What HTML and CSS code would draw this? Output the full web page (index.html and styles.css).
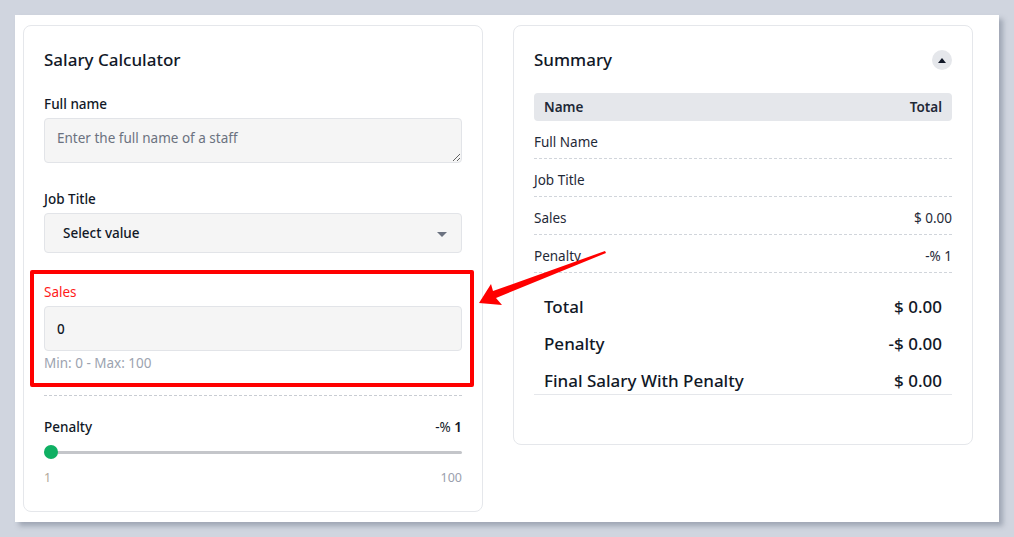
FILE: index.html
```html
<!DOCTYPE html>
<html lang="en">
<head>
<meta charset="utf-8">
<title>Salary Calculator</title>
<link rel="stylesheet" href="styles.css">
</head>
<body>
<div class="frame">
  <div class="cards">
    <section class="card calc">
      <h2 class="title">Salary Calculator</h2>
      <label class="label">Full name</label>
      <textarea class="field textarea" placeholder="Enter the full name of a staff"></textarea>
      <label class="label label-job">Job Title</label>
      <div class="field select"><span>Select value</span><span class="caret"></span></div>
      <label class="label label-sales">Sales</label>
      <input class="field input" type="text" value="0">
      <div class="hint">Min: 0 - Max: 100</div>
      <div class="dash"></div>
      <div class="pen-row"><span>Penalty</span><span class="pen-val">-% <b>1</b></span></div>
      <div class="track"><span class="thumb"></span></div>
      <div class="range-labels"><span class="min">1</span><span class="max">100</span></div>
    </section>
    <section class="card summary">
      <div class="sum-head">
        <h2 class="title">Summary</h2>
        <button class="toggle" type="button"><span class="tri"></span></button>
      </div>
      <div class="thead"><span>Name</span><span>Total</span></div>
      <div class="row"><span>Full Name</span><span></span></div>
      <div class="row"><span>Job Title</span><span></span></div>
      <div class="row"><span>Sales</span><span>$ 0.00</span></div>
      <div class="row"><span>Penalty</span><span>-% 1</span></div>
      <div class="totals">
        <div class="trow"><span>Total</span><span>$ 0.00</span></div>
        <div class="trow"><span>Penalty</span><span>-$ 0.00</span></div>
        <div class="trow"><span>Final Salary With Penalty</span><span>$ 0.00</span></div>
      </div>
    </section>
  </div>
  <div class="annot-box"></div>
  <svg class="annot-arrow" width="1014" height="537" viewBox="0 0 1014 537">
    <polygon points="479,303 491,284 493,291 605,251 606,253 496,298 502,305" fill="#ff0000"/>
  </svg>
</div>
</body>
</html>
```
FILE: styles.css
```css
* { box-sizing: border-box; }
html, body { margin: 0; padding: 0; }
body {
  background: #d0d5df;
  font-family: "Noto Sans", "Open Sans", sans-serif;
  color: #111827;
  width: 1014px;
  height: 537px;
  overflow: hidden;
}
.frame {
  margin: 15px 0 0 15px;
  width: 984px;
  height: 507px;
  background: #ffffff;
  box-shadow: 4px 4px 5px rgba(70, 80, 100, 0.35);
  padding: 10px 0 0 8px;
}
.cards {
  display: grid;
  grid-template-columns: 460px 460px;
  column-gap: 30px;
  align-items: start;
}
.card {
  border: 1px solid #e5e7eb;
  border-radius: 8px;
  padding: 20px;
  display: flex;
  flex-direction: column;
  background: #fff;
}
.calc { padding-bottom: 23px; }
.title {
  margin: 0;
  font-size: 17px;
  line-height: 28px;
  font-weight: 500;
  color: #111827;
}
.calc .title { margin-bottom: 20px; }
.label {
  display: block;
  font-size: 13.5px;
  line-height: 20px;
  font-weight: 500;
  color: #111827;
  margin-bottom: 4px;
}
.label-job { margin-top: 26px; }
.label-sales { margin-top: 29px; color: #ff1a1a; font-weight: 400; }
.field {
  display: block;
  width: 100%;
  background: #f5f5f5;
  border: 1px solid #e2e4e8;
  border-radius: 4px;
  font-family: inherit;
  font-size: 13.5px;
  color: #111827;
}
.textarea {
  height: 45px;
  padding: 9px 12px;
  line-height: 20px;
  resize: vertical;
}
.textarea::placeholder { color: #6b7280; opacity: 1; }
.select {
  height: 40px;
  display: flex;
  align-items: center;
  justify-content: space-between;
  padding: 0 14px 0 18px;
  font-weight: 500;
}
.caret {
  width: 0;
  height: 0;
  border-left: 5px solid transparent;
  border-right: 5px solid transparent;
  border-top: 5px solid #6b7280;
  margin-top: 2px;
}
.input {
  height: 45px;
  padding: 0 12px;
  line-height: 20px;
  font-weight: 500;
}
.hint {
  margin-top: 2px;
  font-size: 13.5px;
  line-height: 20px;
  color: #9ca3af;
}
.dash {
  margin-top: 22px;
  border-top: 1px dashed #c9cdd3;
}
.pen-row {
  margin-top: 21px;
  display: flex;
  justify-content: space-between;
  font-size: 13.5px;
  line-height: 20px;
  font-weight: 500;
}
.pen-val { font-weight: 400; }
.pen-val b { font-weight: 600; }
.track {
  position: relative;
  margin-top: 8px;
  height: 14px;
  display: flex;
  align-items: center;
}
.track::before {
  content: "";
  flex: 1;
  height: 3px;
  border-radius: 2px;
  background: #c4c6ca;
}
.thumb {
  position: absolute;
  left: 0;
  top: 0;
  width: 14px;
  height: 14px;
  border-radius: 50%;
  background: #0fb063;
}
.range-labels {
  margin-top: 9px;
  display: flex;
  justify-content: space-between;
  font-size: 12.5px;
  line-height: 20px;
}
.range-labels .min { color: #b3a798; }
.range-labels .max { color: #9aa0ad; }

.summary { padding-bottom: 20px; }
.sum-head {
  display: flex;
  align-items: center;
  justify-content: space-between;
}
.toggle {
  width: 20px;
  height: 20px;
  border-radius: 50%;
  border: none;
  padding: 0;
  background: #e5e7eb;
  display: flex;
  align-items: center;
  justify-content: center;
}
.tri {
  width: 0;
  height: 0;
  border-left: 4px solid transparent;
  border-right: 4px solid transparent;
  border-bottom: 5px solid #111827;
}
.thead {
  margin-top: 19px;
  height: 28px;
  background: #e5e7eb;
  border-radius: 4px;
  padding: 0 10px;
  display: flex;
  align-items: center;
  justify-content: space-between;
  font-size: 13.5px;
  font-weight: 600;
  color: #1f2937;
}
.row {
  display: flex;
  justify-content: space-between;
  padding: 11px 0 6px;
  font-size: 13.5px;
  line-height: 20px;
  color: #1f2937;
  border-bottom: 1px dashed #d1d5db;
}
.totals {
  padding: 21px 10px 0;
  border-bottom: 1px solid #e5e7eb;
  margin-bottom: 29px;
  display: flex;
  flex-direction: column;
  gap: 11px;
}
.trow {
  display: flex;
  justify-content: space-between;
  font-size: 17px;
  line-height: 26px;
  font-weight: 500;
  color: #111827;
}

.annot-box {
  position: absolute;
  left: 30px;
  top: 270px;
  width: 444px;
  height: 117px;
  border: 4px solid #ff0000;
  border-radius: 2px;
}
.annot-arrow {
  position: absolute;
  left: 0;
  top: 0;
  pointer-events: none;
}
```
